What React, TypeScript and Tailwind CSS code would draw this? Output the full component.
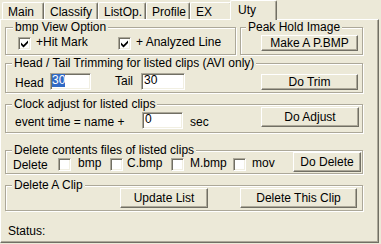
import type { ReactNode } from 'react';

const TABS: { label: string; width: string }[] = [
  { label: 'Main', width: 'w-[42px]' },
  { label: 'Classify', width: 'w-[54px]' },
  { label: 'ListOp.', width: 'w-[48px]' },
  { label: 'Profile', width: 'w-[44px]' },
  { label: 'EX', width: 'w-[42px]' },
];

function Tab({ label, width }: { label: string; width: string }) {
  return (
    <div
      className={`h-[17px] ${width} rounded-t-[2px] border-t border-r border-l border-t-white border-r-[#716F64] border-l-white pt-[3px] pl-[5px] shadow-[inset_-1px_0_0_#ACA899]`}
    >
      {label}
    </div>
  );
}

function Btn({ children, className = '' }: { children: ReactNode; className?: string }) {
  return (
    <button
      type="button"
      className={`flex shrink-0 items-center justify-center border border-t-white border-r-[#716F64] border-b-[#716F64] border-l-white bg-[#ECE9D8] leading-[12px] shadow-[inset_-1px_-1px_0_#ACA899] ${className}`}
    >
      {children}
    </button>
  );
}

function Field({ children, className = '' }: { children: ReactNode; className?: string }) {
  return (
    <div
      className={`flex h-[17px] shrink-0 items-start border border-[#ACA899] border-r-white border-b-white bg-white pl-[1px] shadow-[inset_1px_1px_0_#716F64,inset_-1px_-1px_0_#F1EFE2] ${className}`}
    >
      {children}
    </div>
  );
}

function Check({ checked = false, className = '' }: { checked?: boolean; className?: string }) {
  return (
    <div
      className={`h-[13px] w-[13px] shrink-0 border border-[#ACA899] border-r-white border-b-white bg-white shadow-[inset_1px_1px_0_#716F64,inset_-1px_-1px_0_#F1EFE2] ${className}`}
    >
      {checked && (
        <svg width="11" height="11" viewBox="0 0 11 11">
          <path d="M2 4.5 L4.5 7 L9 2.5 V5 L4.5 9.5 L2 7 Z" fill="#000" />
        </svg>
      )}
    </div>
  );
}

function Group({
  title,
  titleClass = 'ml-[6px]',
  className = '',
  children,
}: {
  title: string;
  titleClass?: string;
  className?: string;
  children?: ReactNode;
}) {
  return (
    <div
      className={`shrink-0 border border-[#ACA899] shadow-[inset_1px_1px_0_#fff,1px_1px_0_#fff] ${className}`}
    >
      <div className={`-mt-[7px] w-fit bg-[#ECE9D8] px-[2px] ${titleClass}`}>{title}</div>
      {children}
    </div>
  );
}

export default function App() {
  return (
    <div className="h-[244px] w-[381px] bg-[#ECE9D8] font-['Liberation_Sans',Arial,sans-serif] text-[12px] leading-[12px] text-black">
      <div className="flex h-[19px] items-end pl-[2px]">
        {TABS.map((t) => (
          <Tab key={t.label} label={t.label} width={t.width} />
        ))}
        <div className="relative z-10 -mb-px -ml-[2px] h-[20px] w-[47px] rounded-t-[2px] border-t border-r border-l border-t-white border-r-[#716F64] border-l-white bg-[#ECE9D8] pt-[3px] pl-[7px] shadow-[inset_-1px_0_0_#ACA899]">
          Uty
        </div>
      </div>

      <div className="flex h-[224px] w-[379px] flex-col border border-t-white border-r-[#716F64] border-b-[#716F64] border-l-white pl-[4px] shadow-[inset_-1px_-1px_0_#ACA899]">
        <div className="mt-[7px] flex">
          <Group title="bmp View Option" titleClass="ml-[7px]" className="h-[28px] w-[231px]">
            <div className="mt-[3px] flex items-start pl-[12px]">
              <div className="flex w-[100px] items-start">
                <Check checked className="mt-[1px]" />
                <span className="ml-[5px]">+Hit Mark</span>
              </div>
              <div className="flex items-start">
                <Check checked className="mt-[1px]" />
                <span className="ml-[5px]">+ Analyzed Line</span>
              </div>
            </div>
          </Group>
          <Group title="Peak Hold Image" titleClass="ml-[5px]" className="ml-[4px] h-[28px] w-[123px]">
            <Btn className="mt-[2px] ml-[20px] h-[16px] w-[97px]">Make A P.BMP</Btn>
          </Group>
        </div>

        <Group title="Head / Tail Trimming for listed clips (AVI only)" className="mt-[8px] h-[30px] w-[358px]">
          <div className="flex items-start">
            <span className="mt-[8px] ml-[9px] w-[35px] shrink-0">Head</span>
            <Field className="mt-[4px] w-[41px]">
              <span className="bg-[#316AC5] leading-[13px] text-white">30</span>
            </Field>
            <span className="mt-[6px] ml-[24px] w-[26px] shrink-0">Tail</span>
            <Field className="mt-[4px] w-[44px] pl-[2px]">
              <span className="leading-[13px]">30</span>
            </Field>
            <Btn className="mt-[5px] ml-[76px] h-[16px] w-[97px]">Do Trim</Btn>
          </div>
        </Group>

        <Group title="Clock adjust for listed clips" className="mt-[11px] h-[29px] w-[358px]">
          <div className="-mt-[3px] flex items-start">
            <span className="mt-[9px] ml-[9px] w-[127px] shrink-0">event time = name +</span>
            <Field className="mt-[5px] w-[41px] pl-[2px]">
              <span className="leading-[13px]">0</span>
            </Field>
            <span className="mt-[9px] ml-[7px] w-[71px] shrink-0">sec</span>
            <Btn className="h-[20px] w-[98px]">Do Adjust</Btn>
          </div>
        </Group>

        <Group title="Delete contents files of listed clips" className="mt-[17px] h-[24px] w-[358px]">
          <div className="-mt-[4px] flex items-start">
            <span className="mt-[7px] ml-[7px] w-[45px] shrink-0">Delete</span>
            <Check className="mt-[6px]" />
            <span className="mt-[5px] ml-[7px] w-[32px] shrink-0">bmp</span>
            <Check className="mt-[6px]" />
            <span className="mt-[5px] ml-[4px] w-[44px] shrink-0">C.bmp</span>
            <Check className="mt-[6px]" />
            <span className="mt-[5px] ml-[6px] w-[43px] shrink-0">M.bmp</span>
            <Check className="mt-[6px]" />
            <span className="mt-[5px] ml-[6px] w-[41px] shrink-0">mov</span>
            <Btn className="h-[20px] w-[68px]">Do Delete</Btn>
          </div>
        </Group>

        <Group title="Delete A Clip" className="mt-[11px] h-[26px] w-[358px]">
          <div className="-mt-[3px] flex items-start">
            <Btn className="ml-[114px] h-[20px] w-[88px]">Update List</Btn>
            <Btn className="ml-[32px] h-[20px] w-[117px]">Delete This Clip</Btn>
          </div>
        </Group>

        <div className="mt-[14px] ml-[3px]">Status:</div>
      </div>
    </div>
  );
}
